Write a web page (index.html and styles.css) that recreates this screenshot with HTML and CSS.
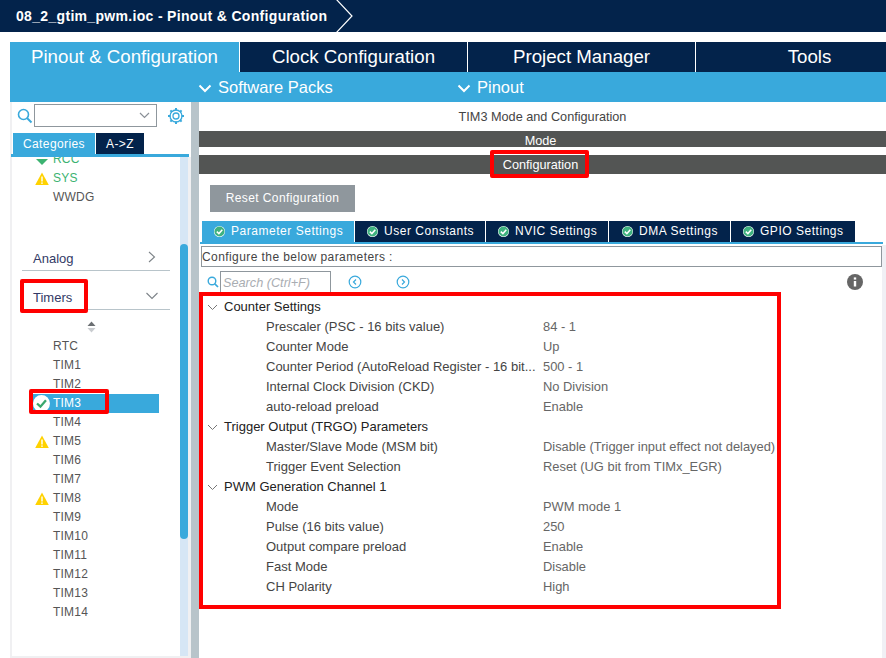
FILE: index.html
```html
<!DOCTYPE html>
<html>
<head>
    <title>08_2_gtim_pwm.ioc - Pinout &amp; Configuration</title>
    <link rel="stylesheet" href="styles.css">
</head>
<body>
  <div class="crumb">
    <span class="crumb-title">08_2_gtim_pwm.ioc - Pinout &amp; Configuration</span>
    <svg class="crumb-arrow" width="20" height="32" viewBox="0 0 20 32"><path d="M1 -1 L17 16 L1 33" fill="none" stroke="#fff" stroke-width="1.2"/></svg>
  </div>

  <div class="main-tabs">
    <div class="main-tab active">Pinout &amp; Configuration</div>
    <div class="main-tab">Clock Configuration</div>
    <div class="main-tab">Project Manager</div>
    <div class="main-tab">Tools</div>
  </div>
  <div class="sub-menu">
    <div class="sub-item packs"><svg width="14" height="9" viewBox="0 0 14 9"><path d="M1.5 1.5 L7 7 L12.5 1.5" fill="none" stroke="#fff" stroke-width="2"/></svg>Software Packs</div>
    <div class="sub-item pinout"><svg width="14" height="9" viewBox="0 0 14 9"><path d="M1.5 1.5 L7 7 L12.5 1.5" fill="none" stroke="#fff" stroke-width="2"/></svg>Pinout</div>
  </div>

  <div class="work">
    <div class="side">
      <div class="side-search">
        <svg width="16" height="16" viewBox="0 0 16 16"><circle cx="6.5" cy="6.5" r="5" fill="none" stroke="#39a9dc" stroke-width="1.6"/><path d="M10 10 L14.5 14.5" stroke="#39a9dc" stroke-width="2"/></svg>
        <div class="combo"><svg width="11" height="7" viewBox="0 0 11 7"><path d="M1 1 L5.5 5.5 L10 1" fill="none" stroke="#8a9097" stroke-width="1.2"/></svg></div>
        <svg class="gear" width="18" height="18" viewBox="0 0 18 18"><circle cx="9" cy="9" r="3" fill="none" stroke="#39a9dc" stroke-width="1.3"/><circle cx="9" cy="9" r="6" fill="none" stroke="#39a9dc" stroke-width="1.3"/><path d="M9 1 V3.5 M9 14.5 V17 M1 9 H3.5 M14.5 9 H17 M3.4 3.4 L5 5 M13 13 L14.6 14.6 M14.6 3.4 L13 5 M5 13 L3.4 14.6" stroke="#39a9dc" stroke-width="2"/></svg>
      </div>
      <div class="side-tabs">
        <div class="side-tab active">Categories</div>
        <div class="side-tab">A-&gt;Z</div>
      </div>
      <div class="side-body">
        <div class="side-list">
          <div class="clipped">
            <div class="item ok"><svg class="icon" width="14" height="14" viewBox="0 0 14 14"><path d="M1 6 L7 12 L13 6 Z" fill="#3cb371"/></svg>RCC</div>
          </div>
          <div class="item ok"><svg class="icon" width="14" height="14" viewBox="0 0 14 14"><use href="#warn"/></svg>SYS</div>
          <div class="item">WWDG</div>

          <div class="cat analog">Analog<svg width="10" height="12" viewBox="0 0 10 12"><path d="M2 1 L7.5 6 L2 11" fill="none" stroke="#7d8388" stroke-width="1.1"/></svg></div>
          <div class="cat timers">Timers<svg width="14" height="8" viewBox="0 0 14 8"><path d="M1.5 1 L7 6.5 L12.5 1" fill="none" stroke="#7d8388" stroke-width="1.1"/></svg></div>
          <div class="sorter"><svg width="9" height="12" viewBox="0 0 9 12"><path d="M4.5 0.5 L8.5 5 H0.5 Z" fill="#6b6f73"/><path d="M4.5 11.5 L8.5 7 H0.5 Z" fill="#c9ccd0"/></svg></div>

          <div class="item">RTC</div>
          <div class="item">TIM1</div>
          <div class="item">TIM2</div>
          <div class="item selected"><svg class="icon big" width="17" height="17" viewBox="0 0 16 16"><circle cx="8" cy="8" r="8" fill="#fff"/><path d="M3.8 8 L7 11 L12.2 5" fill="none" stroke="#3aa76d" stroke-width="2.2"/></svg>TIM3</div>
          <div class="item">TIM4</div>
          <div class="item"><svg class="icon" width="14" height="14" viewBox="0 0 14 14"><use href="#warn"/></svg>TIM5</div>
          <div class="item">TIM6</div>
          <div class="item">TIM7</div>
          <div class="item"><svg class="icon" width="14" height="14" viewBox="0 0 14 14"><use href="#warn"/></svg>TIM8</div>
          <div class="item">TIM9</div>
          <div class="item">TIM10</div>
          <div class="item">TIM11</div>
          <div class="item">TIM12</div>
          <div class="item">TIM13</div>
          <div class="item">TIM14</div>
        </div>
        <div class="scroll"><div class="thumb"></div></div>
      </div>
    </div>

    <div class="content">
      <div class="content-title">TIM3 Mode and Configuration</div>
      <div class="bar mode-bar">Mode</div>
      <div class="bar conf-bar">Configuration</div>
      <div class="reset">Reset Configuration</div>

      <div class="param-tabs">
        <div class="param-tab active w1"><svg width="11" height="11" viewBox="0 0 11 11"><use href="#tick"/></svg>Parameter Settings</div>
        <div class="param-tab w2"><svg width="11" height="11" viewBox="0 0 11 11"><use href="#tick"/></svg>User Constants</div>
        <div class="param-tab w3"><svg width="11" height="11" viewBox="0 0 11 11"><use href="#tick"/></svg>NVIC Settings</div>
        <div class="param-tab w4"><svg width="11" height="11" viewBox="0 0 11 11"><use href="#tick"/></svg>DMA Settings</div>
        <div class="param-tab w5"><svg width="11" height="11" viewBox="0 0 11 11"><use href="#tick"/></svg>GPIO Settings</div>
      </div>
      <div class="configure">Configure the below parameters :</div>

      <div class="param-search">
        <svg width="12" height="12" viewBox="0 0 12 12"><circle cx="5" cy="5" r="3.8" fill="none" stroke="#39a9dc" stroke-width="1.4"/><path d="M7.8 7.8 L11 11" stroke="#39a9dc" stroke-width="1.7"/></svg>
        <div class="search-box">Search (Ctrl+F)</div>
        <svg class="nav first" width="14" height="14" viewBox="0 0 14 14"><circle cx="7" cy="7" r="5.8" fill="none" stroke="#39a9dc" stroke-width="1.2"/><path d="M8 4.5 L5.5 7 L8 9.5" fill="none" stroke="#39a9dc" stroke-width="1.2"/></svg>
        <svg class="nav" width="14" height="14" viewBox="0 0 14 14"><circle cx="7" cy="7" r="5.8" fill="none" stroke="#39a9dc" stroke-width="1.2"/><path d="M6 4.5 L8.5 7 L6 9.5" fill="none" stroke="#39a9dc" stroke-width="1.2"/></svg>
        <svg class="info" width="16" height="16" viewBox="0 0 16 16"><circle cx="8" cy="8" r="8" fill="#666"/><rect x="6.8" y="7" width="2.4" height="5.5" fill="#fff"/><rect x="6.8" y="3.4" width="2.4" height="2.2" fill="#fff"/></svg>
      </div>

      <div class="tree">
        <div class="group"><svg width="11" height="7" viewBox="0 0 11 7"><path d="M1 1 L5.5 5.5 L10 1" fill="none" stroke="#777" stroke-width="1"/></svg>Counter Settings</div>
        <div class="row"><span class="key">Prescaler (PSC - 16 bits value)</span><span class="val">84 - 1</span></div>
        <div class="row"><span class="key">Counter Mode</span><span class="val">Up</span></div>
        <div class="row"><span class="key">Counter Period (AutoReload Register - 16 bit...</span><span class="val">500 - 1</span></div>
        <div class="row"><span class="key">Internal Clock Division (CKD)</span><span class="val">No Division</span></div>
        <div class="row"><span class="key">auto-reload preload</span><span class="val">Enable</span></div>
        <div class="group"><svg width="11" height="7" viewBox="0 0 11 7"><path d="M1 1 L5.5 5.5 L10 1" fill="none" stroke="#777" stroke-width="1"/></svg>Trigger Output (TRGO) Parameters</div>
        <div class="row"><span class="key">Master/Slave Mode (MSM bit)</span><span class="val">Disable (Trigger input effect not delayed)</span></div>
        <div class="row"><span class="key">Trigger Event Selection</span><span class="val">Reset (UG bit from TIMx_EGR)</span></div>
        <div class="group"><svg width="11" height="7" viewBox="0 0 11 7"><path d="M1 1 L5.5 5.5 L10 1" fill="none" stroke="#777" stroke-width="1"/></svg>PWM Generation Channel 1</div>
        <div class="row"><span class="key">Mode</span><span class="val">PWM mode 1</span></div>
        <div class="row"><span class="key">Pulse (16 bits value)</span><span class="val">250</span></div>
        <div class="row"><span class="key">Output compare preload</span><span class="val">Enable</span></div>
        <div class="row"><span class="key">Fast Mode</span><span class="val">Disable</span></div>
        <div class="row"><span class="key">CH Polarity</span><span class="val">High</span></div>
      </div>
    </div>
  </div>

  <!-- red marks drawn on top of the screenshot -->
  <div class="mark mark-conf"></div>
  <div class="mark mark-timers"></div>
  <div class="mark mark-tim3"></div>
  <div class="mark mark-tree"></div>

  <svg class="defs" width="0" height="0">
    <symbol id="warn" viewBox="0 0 14 14"><path d="M7 0.5 L13.8 13 H0.2 Z" fill="#ffd200"/><rect x="6.3" y="4.5" width="1.4" height="5" fill="#fff"/><rect x="6.3" y="10.4" width="1.4" height="1.5" fill="#fff"/></symbol>
    <symbol id="tick" viewBox="0 0 11 11"><circle cx="5.5" cy="5.5" r="5.5" fill="#fff"/><circle cx="5.5" cy="5.5" r="5" fill="#3fb27f"/><path d="M2.8 5.6 L4.9 7.6 L8.3 3.8" fill="none" stroke="#fff" stroke-width="1.5"/></symbol>
  </svg>
</body>
</html>
```

FILE: styles.css
```css
body {
    margin: 0;
    width: 886px;
    height: 658px;
    overflow: hidden;
    position: relative;
    background: #fff;
    font-family: "Liberation Sans", Arial, sans-serif;
    font-size: 12px;
    color: #444;
}

.defs {
    position: absolute;
}

.crumb {
    height: 32px;
    background: #03234b;
    display: flex;
    align-items: center;
    padding-left: 16px;
}

.crumb-title {
    color: #fff;
    font-size: 14px;
    font-weight: bold;
    letter-spacing: 0.32px;
    width: 319px;
    white-space: nowrap;
}

.main-tabs {
    display: flex;
    margin: 10px 0 0 10px;
    height: 30px;
}

.main-tab {
    background: #03234b;
    color: #fff;
    font-size: 18.7px;
    line-height: 30px;
    text-align: center;
    border-left: 1px solid #fff;
    box-sizing: border-box;
    width: 228px;
    flex-shrink: 0;
}

.main-tab.active {
    width: 229px;
    background: #39a9dc;
    border-left: 0;
}

.sub-menu {
    height: 30px;
    margin-left: 10px;
    background: #39a9dc;
    display: flex;
    color: #fff;
    font-size: 16.5px;
    line-height: 30px;
}

.sub-item svg {
    margin-right: 6px;
}

.packs {
    margin-left: 188px;
    width: 259px;
}

.work {
    display: flex;
    margin-left: 10px;
    height: 556px;
}

.side {
    width: 181px;
    box-sizing: border-box;
    border-left: 2px solid #f0f0f2;
    border-bottom: 2px solid #f0f0f2;
    display: flex;
    flex-direction: column;
    flex-shrink: 0;
}

.side-search {
    height: 27px;
    margin-bottom: 4px;
    display: flex;
    align-items: center;
    padding-left: 5px;
}

.combo {
    width: 123px;
    height: 23px;
    box-sizing: border-box;
    border: 1px solid #8f979d;
    margin-left: 1px;
    display: flex;
    align-items: center;
    justify-content: flex-end;
    padding-right: 6px;
}

.gear {
    margin-left: 10px;
}

.side-tabs {
    display: flex;
    gap: 1px;
    padding-left: 2px;
    margin: 0 2px 0 -1px;
    height: 21px;
    border-bottom: 3px solid #39a9dc;
}

.side-tab {
    background: #03234b;
    color: #fff;
    width: 48px;
    text-align: center;
    line-height: 22px;
    letter-spacing: 0.4px;
}

.side-tab.active {
    width: 82px;
    background: #39a9dc;
}

.side-body {
    flex: 1;
    display: flex;
    min-height: 0;
}

.side-list {
    width: 168px;
    overflow: hidden;
}

.clipped {
    height: 12px;
    overflow: hidden;
}

.clipped .item {
    margin-top: -7px;
}

.item {
    height: 19px;
    line-height: 19px;
    margin-left: 21px;
    padding-left: 20px;
    position: relative;
    width: 106px;
    color: #555;
    letter-spacing: 0.2px;
}

.item.ok {
    color: #3cb371;
}

.item.selected {
    background: #39a9dc;
    color: #fff;
}

.icon {
    position: absolute;
    left: 2px;
    top: 3px;
}

.icon.big {
    left: 0;
    top: 1px;
}

.cat {
    margin-left: 10px;
    width: 137px;
    padding-left: 11px;
    height: 25px;
    line-height: 27px;
    border-bottom: 1px solid #b8c4ca;
    display: flex;
    justify-content: space-between;
    color: #333a66;
    font-size: 13px;
}

.cat svg {
    margin: 6px 13px 0 0;
}

.cat.timers svg {
    margin: 8px 11px 0 0;
}

.analog {
    margin-top: 38px;
}

.timers {
    margin-top: 13px;
}

.sorter {
    height: 20px;
    width: 148px;
    padding-left: 10px;
    box-sizing: border-box;
    display: flex;
    align-items: center;
    justify-content: center;
    margin-top: 7px;
}

.scroll {
    width: 8px;
    background: #d6e6f5;
    padding-top: 87px;
    border-right: 3px solid #f0f0f2;
}

.thumb {
    height: 295px;
    background: #39a9dc;
    border-radius: 4px;
}

.content {
    flex: 1;
    border-left: 8px solid #b8c4ca;
    display: flex;
    flex-direction: column;
    background: linear-gradient(to right, #fff 683px, #f0f0f5 683px) no-repeat 0 143px;
}

.content-title {
    height: 29px;
    line-height: 30px;
    text-align: center;
    font-size: 12.7px;
}

.bar {
    background: #535554;
    color: #fff;
    text-align: center;
    font-size: 12.7px;
    padding-right: 4px;
}

.mode-bar {
    height: 16px;
    line-height: 20px;
    margin-bottom: 8px;
    overflow: hidden;
}

.conf-bar {
    height: 19px;
    line-height: 20px;
}

.reset {
    width: 145px;
    height: 27px;
    line-height: 27px;
    margin: 11px 0 0 11px;
    background: #8f979d;
    color: #fff;
    text-align: center;
    letter-spacing: 0.4px;
}

.param-tabs {
    display: flex;
    gap: 1px;
    margin: 9px 0 0 1px;
    padding-left: 2px;
    width: 681px;
    height: 21px;
    border-bottom: 2px solid #39a9dc;
}

.param-tab {
    background: #03234b;
    color: #fff;
    line-height: 21px;
    letter-spacing: 0.53px;
    padding-left: 12px;
    box-sizing: border-box;
    white-space: nowrap;
    display: flex;
    align-items: center;
    flex-shrink: 0;
}

.param-tab svg {
    margin-right: 6px;
}

.param-tab.active {
    background: #39a9dc;
}

.w1 { width: 152px; }
.w2 { width: 130px; }
.w3 { width: 122px; }
.w4 { width: 121px; padding-left: 13px; }
.w5 { width: 124px; }

.configure {
    margin: 2px 0 0 2px;
    width: 681px;
    height: 21px;
    line-height: 20px;
    box-sizing: border-box;
    border: 1px solid #8f979d;
    letter-spacing: 0.42px;
}

.param-search {
    display: flex;
    align-items: center;
    height: 22px;
    margin-top: 4px;
    padding-left: 8px;
}

.search-box {
    width: 111px;
    height: 22px;
    line-height: 22px;
    box-sizing: border-box;
    border: 1px solid #8f979d;
    border-bottom: 0;
    margin-left: 1px;
    padding-left: 2px;
    font-style: italic;
    font-size: 12.7px;
    color: #a9adb2;
}

.nav.first {
    margin-left: 17px;
}

.nav {
    margin-left: 34px;
}

.info {
    margin-left: 437px;
}

.tree {
    margin-top: 3px;
    padding-left: 8px;
    font-size: 13px;
}

.group, .row {
    height: 20px;
    line-height: 22px;
    white-space: nowrap;
    display: flex;
}

.group {
    color: #222;
    align-items: center;
    box-sizing: border-box;
    padding-top: 2px;
}

.group svg {
    margin-right: 6px;
}

.key {
    width: 277px;
    margin-left: 59px;
    color: #444;
}

.val {
    color: #666;
    font-size: 12.9px;
}

.mark {
    position: absolute;
    box-sizing: border-box;
    border: 4px solid #ff0000;
    border-radius: 2px;
}

.mark-conf { left: 490px; top: 150px; width: 99px; height: 28px; }
.mark-timers { left: 20px; top: 279px; width: 68px; height: 34px; }
.mark-tim3 { left: 29px; top: 389px; width: 80px; height: 25px; }
.mark-tree { left: 199px; top: 292px; width: 582px; height: 317px; border-radius: 0; }
```
